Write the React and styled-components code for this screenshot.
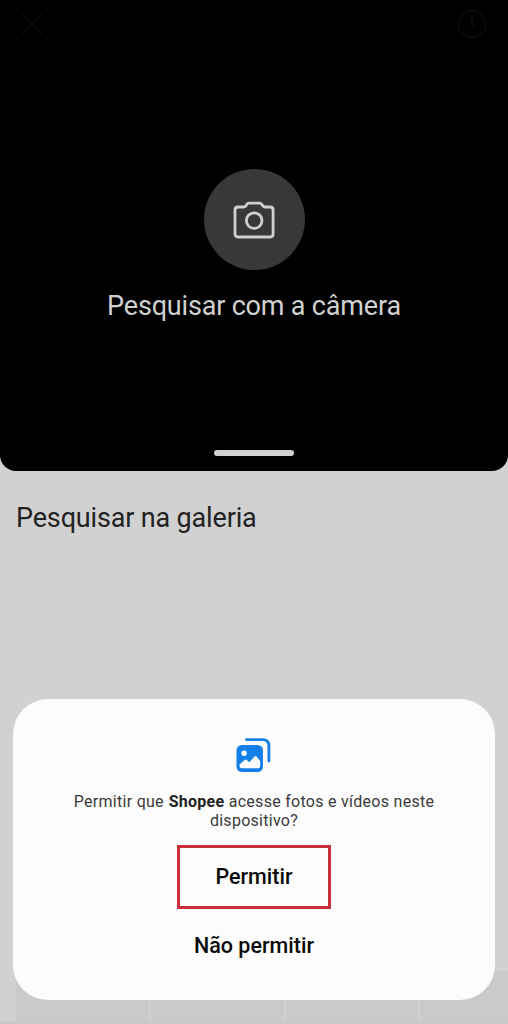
import React from 'react';
import styled, { createGlobalStyle } from 'styled-components';

const GlobalStyle = createGlobalStyle`
  * {
    box-sizing: border-box;
  }
  body {
    margin: 0;
    background: #d1d1d1;
    font-family: Roboto, "Noto Sans", sans-serif;
  }
`;

const Screen = styled.div`
  position: relative;
  display: flex;
  flex-direction: column;
  width: 508px;
  height: 1024px;
  overflow: hidden;
  background: #d1d1d1;
`;

const CameraPanel = styled.section`
  display: flex;
  flex-direction: column;
  align-items: center;
  height: 471px;
  background: #000;
  border-radius: 0 0 16px 16px;
`;

const TopBar = styled.header`
  display: flex;
  justify-content: space-between;
  width: 100%;
  height: 169px;
  padding: 8px 20px 0 16px;
`;

const BarIcon = styled.svg`
  width: 32px;
  height: 32px;
  fill: none;
  stroke: #0a0a0a;
  stroke-width: 2;
`;

const CameraButton = styled.button`
  display: flex;
  align-items: center;
  justify-content: center;
  width: 101px;
  height: 101px;
  padding: 0;
  border: 0;
  border-radius: 50%;
  background: #383838;
`;

const CameraTitle = styled.h1`
  margin: 20px 0 0;
  font-size: 27px;
  font-weight: 400;
  line-height: 32px;
  letter-spacing: -0.18px;
  color: #d0d0d0;
`;

const Handle = styled.div`
  width: 80px;
  height: 6px;
  margin-top: auto;
  margin-bottom: 15px;
  border-radius: 3px;
  background: #d1d1d1;
`;

const Gallery = styled.section`
  display: flex;
  flex: 1;
  flex-direction: column;
  justify-content: space-between;
`;

const GalleryTitle = styled.h2`
  margin: 31px 0 0 16px;
  font-size: 27px;
  font-weight: 400;
  line-height: 32px;
  letter-spacing: -0.16px;
  color: #222;
`;

const Thumbs = styled.div`
  display: grid;
  grid-template-columns: 133px 133px 132px 88px;
  gap: 2px;
  height: 53px;
  padding-left: 16px;
  border-bottom: 3px solid #c9c9c9;
`;

const Thumb = styled.div`
  background: #cacaca;
`;

const Dialog = styled.div`
  position: absolute;
  top: 699px;
  left: 13px;
  display: flex;
  flex-direction: column;
  align-items: center;
  width: 482px;
  height: 301px;
  padding-top: 38px;
  border-radius: 35px;
  background: #fcfcfc;
`;

const Message = styled.p`
  width: 400px;
  margin: 19px 0 0;
  font-size: 16px;
  line-height: 19px;
  letter-spacing: 0.28px;
  text-align: center;
  color: #3a3a3a;

  b {
    margin-left: 0.5px;
    color: #222;
  }
`;

const DialogButton = styled.button`
  width: 154px;
  height: 64px;
  margin-top: ${(props) => (props.$marked ? '15px' : '5px')};
  padding: 0;
  border: ${(props) => (props.$marked ? '3px solid #cb2c38' : '0')};
  background: none;
  font-family: inherit;
  font-size: 21.5px;
  font-weight: 500;
  line-height: 26px;
  white-space: nowrap;
  color: #0a0a0a;
`;

function CameraIcon() {
  return (
    <svg width="42" height="38" viewBox="0 0 42 38" fill="none" stroke="#d0d0d0" strokeWidth="2.8" strokeLinejoin="round">
      <path d="M5 6H10.5Q12.5 6 13.3 4.2T16 2.2H26.5Q28 2.2 29 3.8T31.5 6H37.1Q40.1 6 40.1 9V33Q40.1 36 37.1 36H5Q2 36 2 33V9Q2 6 5 6Z" />
      <circle cx="21.2" cy="19.6" r="7.8" />
    </svg>
  );
}

function PhotosIcon() {
  return (
    <svg width="36" height="36" viewBox="0.5 0 36 36">
      <path d="M11 2.6H27Q33.4 2.6 33.4 9V24" fill="none" stroke="#1280e8" strokeWidth="2.8" strokeLinecap="round" />
      <rect x="1" y="8" width="26.5" height="27" rx="5.5" fill="#1280e8" />
      <circle cx="8.6" cy="16.2" r="2.7" fill="#fcfcfc" />
      <path d="M4 27.5L9.2 23Q10.3 22.2 11.3 23L14 25.3L19 19.5Q20 18.5 21 19.5L24.7 24V29Q24.7 31.2 22.5 31.2H6.2Q4 31.2 4 29Z" fill="#fcfcfc" />
    </svg>
  );
}

export default function App() {
  return (
    <Screen>
      <GlobalStyle />
      <CameraPanel>
        <TopBar>
          <BarIcon viewBox="0 0 32 32">
            <path d="M6 6L26 26M26 6L6 26" />
          </BarIcon>
          <BarIcon viewBox="0 0 32 32">
            <circle cx="16" cy="16" r="13.5" />
            <path d="M16 7V17L21 20" />
          </BarIcon>
        </TopBar>
        <CameraButton>
          <CameraIcon />
        </CameraButton>
        <CameraTitle>Pesquisar com a câmera</CameraTitle>
        <Handle />
      </CameraPanel>
      <Gallery>
        <GalleryTitle>Pesquisar na galeria</GalleryTitle>
        <Thumbs>
          <Thumb />
          <Thumb />
          <Thumb />
          <Thumb />
        </Thumbs>
      </Gallery>
      <Dialog>
        <PhotosIcon />
        <Message>
          Permitir que <b>Shopee</b> acesse fotos e vídeos neste dispositivo?
        </Message>
        <DialogButton $marked>Permitir</DialogButton>
        <DialogButton>Não permitir</DialogButton>
      </Dialog>
    </Screen>
  );
}
